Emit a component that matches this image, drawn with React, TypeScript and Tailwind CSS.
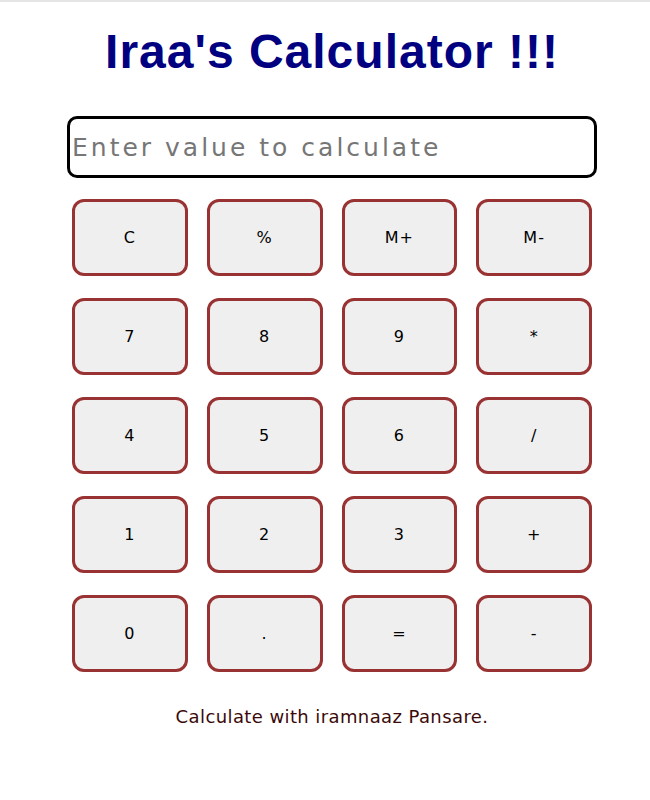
import React from 'react';

const keys = ['C', '%', 'M+', 'M-', '7', '8', '9', '*', '4', '5', '6', '/', '1', '2', '3', '+', '0', '.', '=', '-'];

export default function App() {
  return (
    <div className="min-h-[800px] bg-white border-t-2 border-[#e5e5e5] font-['DejaVu_Sans',sans-serif]">
      <h1 className="pt-[22px] pl-[14px] text-center font-['Liberation_Sans',Arial,sans-serif] text-[48px] font-bold leading-[56px] tracking-[1px] text-[#000080]">
        Iraa&apos;s Calculator !!!
      </h1>
      <div className="ml-[67px] mt-[36px] w-[530px]">
        <input
          type="text"
          placeholder="Enter value to calculate"
          className="block h-[62px] w-full rounded-[10px] border-[3px] border-black px-[2px] text-[25px] tracking-[3px] placeholder:text-[#767676] focus:outline-none"
        />
      </div>
      <div className="ml-[72px] mt-[21px] grid w-[520px] grid-cols-4 gap-x-[19px] gap-y-[22px]">
        {keys.map((k) => (
          <button
            key={k}
            className="h-[77px] rounded-[12px] border-[3px] border-[#993333] bg-[#efefef] text-[16px] tracking-[1px] text-black"
          >
            {k}
          </button>
        ))}
      </div>
      <p className="mt-[31px] pl-[14px] text-center text-[18px] tracking-[0.4px] text-[#3b0a0a]">
        Calculate with iramnaaz Pansare.
      </p>
    </div>
  );
}
